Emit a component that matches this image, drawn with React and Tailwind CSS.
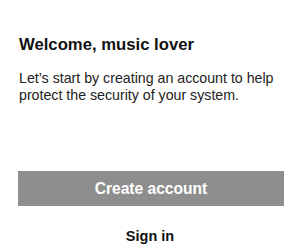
export default function App() {
  return (
    <div className="w-[300px] h-[250px] bg-white flex flex-col px-[18px] font-['Liberation_Sans',Arial,sans-serif] text-[#111]">
      <h1 className="mt-[35px] pl-px text-[16.7px] leading-[20px] font-bold">Welcome, music lover</h1>
      <p className="mt-[15px] pl-px text-[14.2px] leading-[17px] text-[#222]">
        Let’s start by creating an account to help protect the security of your system.
      </p>
      <button className="mt-[67px] h-[35px] w-[266px] bg-[#8e8e8e] text-white text-[15.6px] font-bold">
        Create account
      </button>
      <button className="mt-[22px] self-center text-[14.5px] font-bold leading-[16px]">Sign in</button>
    </div>
  );
}
